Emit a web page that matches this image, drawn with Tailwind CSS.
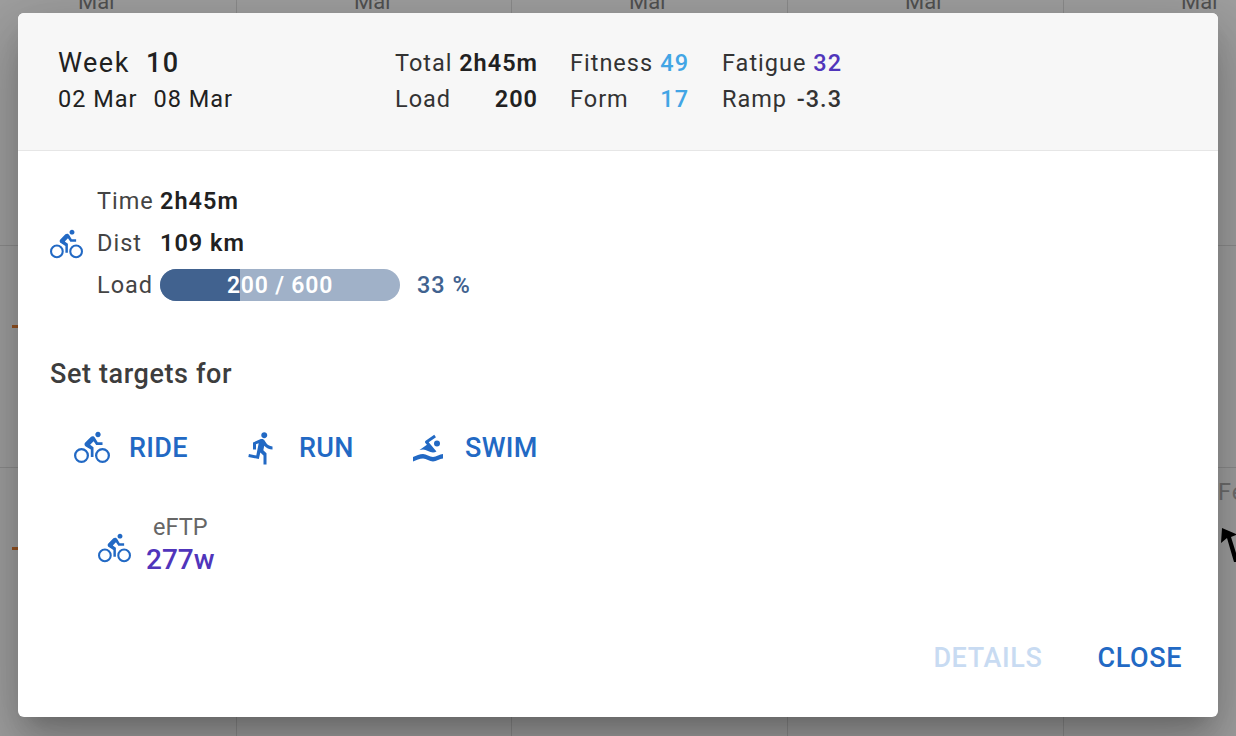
<!DOCTYPE html>
<html lang="en">
<head>
  <meta charset="UTF-8" />
  <title>Week 10</title>
  <script src="https://cdn.jsdelivr.net/npm/@tailwindcss/browser@4"></script>
</head>
<body class="bg-white font-['Roboto',sans-serif] overflow-hidden">
  <div class="relative w-[1236px] h-[736px] overflow-hidden">

    <!-- calendar behind the dialog -->
    <div class="grid grid-cols-[237px_275px_276px_276px_172px] h-full text-[22px] text-[#777]">
      <div class="border-r border-[#ddd] pl-[78px] -mt-[15px]">Mar</div>
      <div class="border-r border-[#ddd] pl-[117px] -mt-[15px]">Mar</div>
      <div class="border-r border-[#ddd] pl-[117px] -mt-[15px]">Mar</div>
      <div class="border-r border-[#ddd] pl-[117px] -mt-[15px]">Mar</div>
      <div class="pl-[117px] -mt-[15px]">Mar</div>
    </div>
    <div class="absolute left-0 right-0 top-[245px] h-px bg-[#ddd]"></div>
    <div class="absolute left-0 right-0 top-[467px] h-px bg-[#ddd]"></div>
    <div class="absolute left-[12px] top-[325px] w-[8px] h-[3px] bg-[#f07a24]"></div>
    <div class="absolute left-[12px] top-[547px] w-[8px] h-[3px] bg-[#f07a24]"></div>
    <div class="absolute left-[1218px] top-[479px] text-[23.5px] leading-[26px] text-[#aaa] tracking-[1px]">Fe</div>
    <svg class="absolute left-[1220px] top-[526px] z-20" width="16" height="40" viewBox="0 0 16 40"><path d="M2 2L16 8V9L11 11L16 27V36H14L7 12L1 17Z" fill="#000"/></svg>

    <!-- overlay -->
    <div class="absolute inset-0 bg-[#212121]/43"></div>

    <!-- dialog -->
    <div class="absolute inset-0 flex justify-center items-start pt-[13px]">
      <div class="w-[1200px] h-[704px] bg-white rounded-[6px] overflow-hidden flex flex-col shadow-[0_15px_21px_-10px_rgba(0,0,0,0.2),0_33px_52px_4px_rgba(0,0,0,0.14),0_12px_63px_11px_rgba(0,0,0,0.12)]">

        <!-- header -->
        <div class="h-[138px] shrink-0 bg-[#f7f7f7] border-b border-[#e6e6e6] flex items-start pl-[40px] pt-[32px] text-[23.5px] leading-[36px] tracking-[1px] text-[#333]">
          <div class="w-[337px] text-[#212121]">
            <div class="flex text-[27px] tracking-[1.5px]">
              <span class="w-[88px]">Week</span><span class="font-medium">10</span>
            </div>
            <div class="flex gap-[16px]"><span>02 Mar</span><span>08 Mar</span></div>
          </div>
          <div class="grid grid-cols-[auto_auto] w-[143px] justify-between">
            <span>Total</span><span class="font-semibold text-right text-[#212121]">2h45m</span>
            <span>Load</span><span class="font-semibold text-right text-[#212121]">200</span>
          </div>
          <div class="grid grid-cols-[auto_auto] w-[119px] justify-between ml-[32px]">
            <span>Fitness</span><span class="font-medium text-right text-[#42a5e5]">49</span>
            <span>Form</span><span class="font-medium text-right text-[#42a5e5]">17</span>
          </div>
          <div class="w-[120px] ml-[33px]">
            <div class="flex justify-between"><span>Fatigue</span><span class="font-medium text-[#5035bb]">32</span></div>
            <div class="flex justify-between"><span>Ramp</span><span class="font-medium">-3.3</span></div>
          </div>
        </div>

        <!-- body -->
        <div class="flex-1 pl-[32px] text-[23.5px] tracking-[1px] text-[#444]">
          <div class="flex items-center pt-[30px]">
            <svg class="w-[33px] h-[33px] text-[#2269c4]" viewBox="0 0 24 24" fill="currentColor"><path d="M5,20.5A3.5,3.5 0 0,1 1.5,17A3.5,3.5 0 0,1 5,13.5A3.5,3.5 0 0,1 8.5,17A3.5,3.5 0 0,1 5,20.5M5,12A5,5 0 0,0 0,17A5,5 0 0,0 5,22A5,5 0 0,0 10,17A5,5 0 0,0 5,12M14.8,10H19V8.2H15.8L13.86,4.93C13.57,4.43 13,4.1 12.4,4.1C11.93,4.1 11.5,4.29 11.2,4.6L7.5,8.29C7.19,8.6 7,9 7,9.5C7,10.13 7.33,10.66 7.85,10.97L11.2,13V18H13V11.5L10.75,9.85L13.07,7.5M19,20.5A3.5,3.5 0 0,1 15.5,17A3.5,3.5 0 0,1 19,13.5A3.5,3.5 0 0,1 22.5,17A3.5,3.5 0 0,1 19,20.5M19,12A5,5 0 0,0 14,17A5,5 0 0,0 19,22A5,5 0 0,0 24,17A5,5 0 0,0 19,12M16,4.8C17,4.8 17.8,4 17.8,3C17.8,2 17,1.2 16,1.2C15,1.2 14.2,2 14.2,3C14.2,4 15,4.8 16,4.8Z"/></svg>
            <div class="ml-[14px] grid grid-cols-[63px_auto] auto-rows-[42px] items-center">
              <span>Time</span><span class="font-semibold text-[#212121]">2h45m</span>
              <span>Dist</span><span class="font-semibold text-[#212121]">109 km</span>
              <span>Load</span>
              <div class="flex items-center">
                <div class="relative w-[240px] h-[32px] -mt-[2px] rounded-full overflow-hidden bg-[#a0b1c8] text-center text-white font-semibold text-[23px] tracking-[0.8px] leading-[34px]">
                  <div class="absolute left-0 top-0 bottom-0 w-[80px] bg-[#41628f]"></div>
                  <span class="relative">200 / 600</span>
                </div>
                <span class="ml-[17px] font-medium text-[#41628f]">33 %</span>
              </div>
            </div>
          </div>

          <div class="mt-[51px] text-[27px] leading-[32px] font-medium text-[#3d3d3d] tracking-[0.6px]">Set targets for</div>

          <div class="flex mt-[40px] pl-[24px] text-[#2269c4] text-[27px] leading-[32px] font-medium tracking-[0.3px]">
            <div class="flex items-center w-[170px]">
              <svg class="w-[36px] h-[36px]" viewBox="0 0 24 24" fill="currentColor"><path d="M5,20.5A3.5,3.5 0 0,1 1.5,17A3.5,3.5 0 0,1 5,13.5A3.5,3.5 0 0,1 8.5,17A3.5,3.5 0 0,1 5,20.5M5,12A5,5 0 0,0 0,17A5,5 0 0,0 5,22A5,5 0 0,0 10,17A5,5 0 0,0 5,12M14.8,10H19V8.2H15.8L13.86,4.93C13.57,4.43 13,4.1 12.4,4.1C11.93,4.1 11.5,4.29 11.2,4.6L7.5,8.29C7.19,8.6 7,9 7,9.5C7,10.13 7.33,10.66 7.85,10.97L11.2,13V18H13V11.5L10.75,9.85L13.07,7.5M19,20.5A3.5,3.5 0 0,1 15.5,17A3.5,3.5 0 0,1 19,13.5A3.5,3.5 0 0,1 22.5,17A3.5,3.5 0 0,1 19,20.5M19,12A5,5 0 0,0 14,17A5,5 0 0,0 19,22A5,5 0 0,0 24,17A5,5 0 0,0 19,12M16,4.8C17,4.8 17.8,4 17.8,3C17.8,2 17,1.2 16,1.2C15,1.2 14.2,2 14.2,3C14.2,4 15,4.8 16,4.8Z"/></svg>
              <span class="ml-[19px]">RIDE</span>
            </div>
            <div class="flex items-center w-[166px]">
              <svg class="w-[36px] h-[36px]" viewBox="0 0 24 24" fill="currentColor"><path d="M13.5,5.5C14.59,5.5 15.5,4.58 15.5,3.5C15.5,2.38 14.59,1.5 13.5,1.5C12.39,1.5 11.5,2.38 11.5,3.5C11.5,4.58 12.39,5.5 13.5,5.5M9.89,19.38L10.89,15L13,17V23H15V15.5L12.89,13.5L13.5,10.5C14.79,12 16.79,13 19,13V11C17.09,11 15.5,10 14.69,8.58L13.69,7C13.29,6.38 12.69,6 12,6C11.69,6 11.5,6.08 11.19,6.08L6,8.28V13H8V9.58L9.79,8.88L8.19,17L3.29,16L2.89,18L9.89,19.38Z"/></svg>
              <span class="ml-[19px]">RUN</span>
            </div>
            <div class="flex items-center">
              <svg class="w-[36px] h-[36px]" viewBox="0 0 24 24" fill="currentColor"><path d="M2,18C4.22,17 6.44,16 8.67,16C10.89,16 13.11,18 15.33,18C17.56,18 19.78,16 22,16V19C19.78,19 17.56,21 15.33,21C13.11,21 10.89,19 8.67,19C6.44,19 4.22,20 2,21V18M8.67,13C7.89,13 7.12,13.12 6.35,13.32L11.27,9.88L10.23,8.64C10.09,8.47 10,8.24 10,8C10,7.66 10.17,7.35 10.44,7.17L16.16,3.17L17.31,4.8L12.47,8.19L17.65,14.36C16.93,14.77 16.12,15 15.33,15C13.11,15 10.89,13 8.67,13M18,7A2,2 0 0,1 20,9A2,2 0 0,1 18,11A2,2 0 0,1 16,9A2,2 0 0,1 18,7Z"/></svg>
              <span class="ml-[19px]">SWIM</span>
            </div>
          </div>

          <div class="flex items-center mt-[48px] pl-[48px] tracking-normal">
            <svg class="w-[33px] h-[33px] mt-[2px] text-[#2269c4]" viewBox="0 0 24 24" fill="currentColor"><path d="M5,20.5A3.5,3.5 0 0,1 1.5,17A3.5,3.5 0 0,1 5,13.5A3.5,3.5 0 0,1 8.5,17A3.5,3.5 0 0,1 5,20.5M5,12A5,5 0 0,0 0,17A5,5 0 0,0 5,22A5,5 0 0,0 10,17A5,5 0 0,0 5,12M14.8,10H19V8.2H15.8L13.86,4.93C13.57,4.43 13,4.1 12.4,4.1C11.93,4.1 11.5,4.29 11.2,4.6L7.5,8.29C7.19,8.6 7,9 7,9.5C7,10.13 7.33,10.66 7.85,10.97L11.2,13V18H13V11.5L10.75,9.85L13.07,7.5M19,20.5A3.5,3.5 0 0,1 15.5,17A3.5,3.5 0 0,1 19,13.5A3.5,3.5 0 0,1 22.5,17A3.5,3.5 0 0,1 19,20.5M19,12A5,5 0 0,0 14,17A5,5 0 0,0 19,22A5,5 0 0,0 24,17A5,5 0 0,0 19,12M16,4.8C17,4.8 17.8,4 17.8,3C17.8,2 17,1.2 16,1.2C15,1.2 14.2,2 14.2,3C14.2,4 15,4.8 16,4.8Z"/></svg>
            <div class="ml-[15px] flex flex-col items-center">
              <span class="text-[#666] leading-[26px]">eFTP</span>
              <span class="text-[#5035bb] text-[28px] leading-[40px] font-medium">277w</span>
            </div>
          </div>
        </div>

        <!-- actions -->
        <div class="flex justify-end pr-[36px] pb-[43px] gap-[55px] text-[27px] leading-[32px] font-medium tracking-[0.6px]">
          <span class="text-[#c8dbf2]">DETAILS</span>
          <span class="text-[#2269c4]">CLOSE</span>
        </div>
      </div>
    </div>
  </div>
</body>
</html>
